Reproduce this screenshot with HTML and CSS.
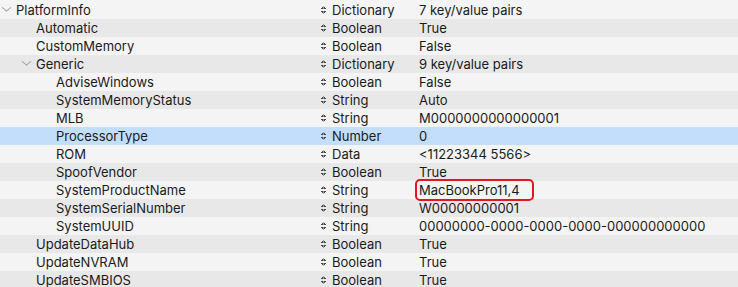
FILE: index.html
```html
<!DOCTYPE html>
<html lang="en">
<head>
    <meta charset="UTF-8">
    <title>PlatformInfo</title>
    <link rel="stylesheet" href="styles.css">
</head>
<body>
    <div class="plist">
        <div class="row">
            <div class="key lvl0"><span class="chevron"></span>PlatformInfo</div>
            <div class="type"><span class="updown"></span>Dictionary</div>
            <div class="value">7 key/value pairs</div>
        </div>
        <div class="row">
            <div class="key lvl1">Automatic</div>
            <div class="type"><span class="updown"></span>Boolean</div>
            <div class="value">True</div>
        </div>
        <div class="row">
            <div class="key lvl1">CustomMemory</div>
            <div class="type"><span class="updown"></span>Boolean</div>
            <div class="value">False</div>
        </div>
        <div class="row">
            <div class="key lvl1 open"><span class="chevron"></span>Generic</div>
            <div class="type"><span class="updown"></span>Dictionary</div>
            <div class="value">9 key/value pairs</div>
        </div>
        <div class="row">
            <div class="key lvl2">AdviseWindows</div>
            <div class="type"><span class="updown"></span>Boolean</div>
            <div class="value">False</div>
        </div>
        <div class="row">
            <div class="key lvl2">SystemMemoryStatus</div>
            <div class="type"><span class="updown"></span>String</div>
            <div class="value">Auto</div>
        </div>
        <div class="row">
            <div class="key lvl2">MLB</div>
            <div class="type"><span class="updown"></span>String</div>
            <div class="value">M0000000000000001</div>
        </div>
        <div class="row selected">
            <div class="key lvl2">ProcessorType</div>
            <div class="type"><span class="updown"></span>Number</div>
            <div class="value">0</div>
        </div>
        <div class="row">
            <div class="key lvl2">ROM</div>
            <div class="type"><span class="updown"></span>Data</div>
            <div class="value">&lt;11223344 5566&gt;</div>
        </div>
        <div class="row">
            <div class="key lvl2">SpoofVendor</div>
            <div class="type"><span class="updown"></span>Boolean</div>
            <div class="value">True</div>
        </div>
        <div class="row">
            <div class="key lvl2">SystemProductName</div>
            <div class="type"><span class="updown"></span>String</div>
            <div class="value"><span class="flagged">MacBookPro11,4</span></div>
        </div>
        <div class="row">
            <div class="key lvl2">SystemSerialNumber</div>
            <div class="type"><span class="updown"></span>String</div>
            <div class="value">W00000000001</div>
        </div>
        <div class="row">
            <div class="key lvl2">SystemUUID</div>
            <div class="type"><span class="updown"></span>String</div>
            <div class="value">00000000-0000-0000-0000-000000000000</div>
        </div>
        <div class="row">
            <div class="key lvl1">UpdateDataHub</div>
            <div class="type"><span class="updown"></span>Boolean</div>
            <div class="value">True</div>
        </div>
        <div class="row">
            <div class="key lvl1">UpdateNVRAM</div>
            <div class="type"><span class="updown"></span>Boolean</div>
            <div class="value">True</div>
        </div>
        <div class="row">
            <div class="key lvl1">UpdateSMBIOS</div>
            <div class="type"><span class="updown"></span>Boolean</div>
            <div class="value">True</div>
        </div>
    </div>
</body>
</html>
```

FILE: styles.css
```css
body, html {
    margin: 0;
    padding: 0;
    background-color: #f4f4f4;
    font-family: Inter, "Liberation Sans", sans-serif;
    font-size: 13px;
    color: #1a1a1a;
    overflow: hidden;
}
.plist {
    padding-top: 1px;
}
.row {
    display: flex;
    align-items: center;
    height: 18px;
    line-height: 18px;
    background-color: #f4f4f4;
    white-space: nowrap;
}
.row:nth-child(even) {
    background-color: #e8e8e8;
}
.row.selected {
    background-color: #c2defa;
}
.key {
    width: 318px;
    box-sizing: border-box;
    display: flex;
    align-items: center;
}
.lvl0 { padding-left: 16px; }
.lvl1 { padding-left: 36px; }
.lvl2 { padding-left: 56px; }
.chevron {
    width: 6px;
    height: 6px;
    border-right: 1px solid #9a9a9a;
    border-bottom: 1px solid #9a9a9a;
    transform: scaleY(0.8) rotate(45deg);
    margin-left: -13px;
    margin-right: 6px;
    margin-top: -5px;
}
.type {
    width: 97px;
    display: flex;
    align-items: center;
}
.updown {
    width: 5px;
    height: 8px;
    margin-left: 3px;
    margin-right: 6px;
    background:
        linear-gradient(to bottom right, transparent 50%, #4a4a4a 50%) left top / 50% 3px no-repeat,
        linear-gradient(to bottom left, transparent 50%, #4a4a4a 50%) right top / 50% 3px no-repeat,
        linear-gradient(to top right, transparent 50%, #4a4a4a 50%) left bottom / 50% 3px no-repeat,
        linear-gradient(to top left, transparent 50%, #4a4a4a 50%) right bottom / 50% 3px no-repeat;
}
.value {
    padding-left: 4px;
}
.flagged {
    display: inline-block;
    margin: -2px 0 -2px -4px;
    padding: 0 12px 0 2px;
    border: 2px solid #e5161f;
    border-radius: 5px;
}
```
